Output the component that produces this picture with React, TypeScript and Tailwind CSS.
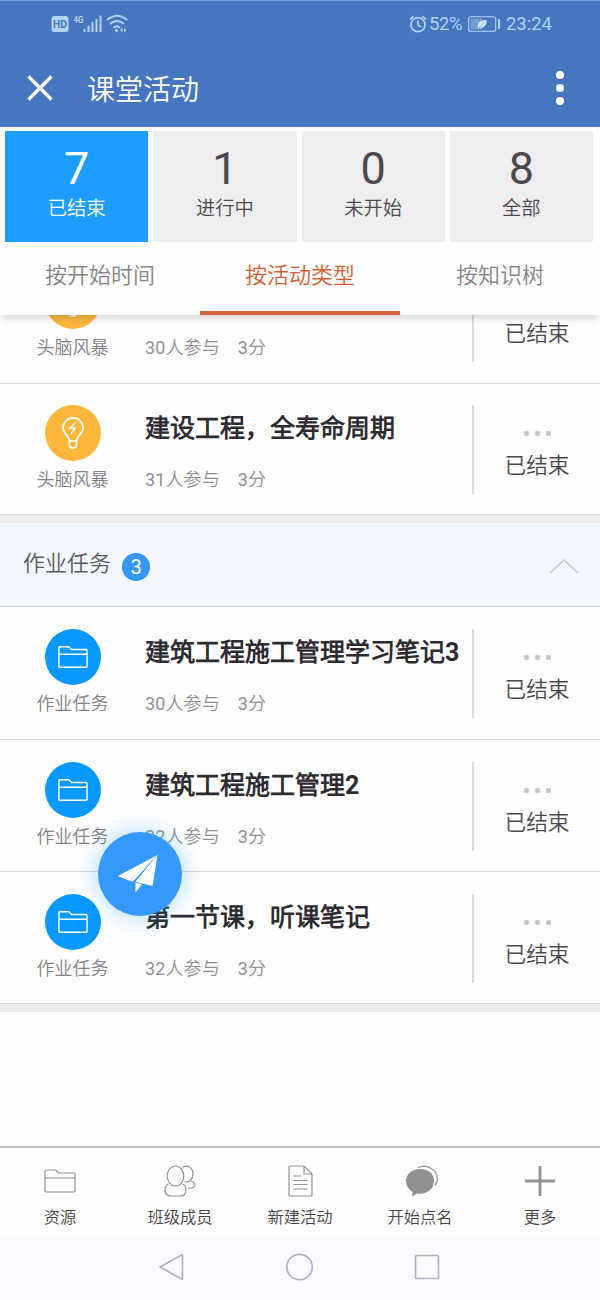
import type { ReactNode } from "react";

const FolderIcon = ({ className }: { className: string }) => (
  <svg viewBox="0 0 32 24" className={className} fill="none" stroke="currentColor" strokeLinejoin="round">
    <path d="M1 22V2.2Q1 1 2.200 1H11.500L14.500 4H29.800Q31 4 31 5.200V21.800Q31 23 29.800 23H2.200Q1 23 1 21.800ZM1 9H31" />
  </svg>
);

const BulbIcon = () => (
  <svg viewBox="0 0 24 34" className="h-[34px] w-6" fill="none" stroke="white" strokeWidth="1.700" strokeLinejoin="round" strokeLinecap="round">
    <path d="M8.500 25C8.500 20 2 18 2 11.800a10 10 0 0 1 20 0C22 18 15.500 20 15.500 25Z" />
    <path d="M8.500 25V28.500Q8.500 32 12 32T15.500 28.500V25" />
    <path d="M14 7L8.500 12.500L14.500 12L10 17.500" strokeWidth="1.300" />
  </svg>
);

type Item = { kind: "storm" | "task"; title?: string; people: number; row: string };

function Row({ kind, title, people, row }: Item) {
  return (
    <div className={`flex shrink-0 border-b border-[#d9d8db] bg-[#fefefe] ${row}`}>
      <div className="flex w-[145px] shrink-0 flex-col items-center">
        <div className={`flex h-14 w-14 items-center justify-center rounded-full text-white ${kind === "storm" ? "bg-[#fcb63b]" : "bg-[#0898ff]"}`}>
          {kind === "storm" ? <BulbIcon /> : <FolderIcon className="h-6 w-[30px] stroke-[1.500]" />}
        </div>
        <div className="mt-[7px] text-[18px] leading-6 text-[#858287]">{kind === "storm" ? "头脑风暴" : "作业任务"}</div>
      </div>
      <div className="w-[327px] shrink-0">
        <div className="mt-[8px] h-8 whitespace-nowrap text-[25px] leading-8 font-bold text-[#2d2b30]">{title}</div>
        <div className="mt-[23px] flex gap-[18px] text-[18px] leading-6 tracking-[0.1px] text-[#929094]">
          <span>{people}人参与</span>
          <span>3分</span>
        </div>
      </div>
      <div className="flex h-[89px] flex-1 flex-col items-center border-l-2 border-[#dbdadd]">
        <div className="mt-[26px] flex h-[5px] gap-[6px]">
          <i className="h-[5px] w-[5px] rounded-[2px] bg-[#c6c4c8]" />
          <i className="h-[5px] w-[5px] rounded-[2px] bg-[#c6c4c8]" />
          <i className="h-[5px] w-[5px] rounded-[2px] bg-[#c6c4c8]" />
        </div>
        <div className="mt-[14px] text-[21.7px] leading-8 text-[#4b494e]">已结束</div>
      </div>
    </div>
  );
}

const counts = [
  { n: 7, label: "已结束", style: "bg-[#1c9dff] text-white" },
  { n: 1, label: "进行中", style: "bg-[#efedef] text-[#4b494c]" },
  { n: 0, label: "未开始", style: "bg-[#efedef] text-[#4b494c]" },
  { n: 8, label: "全部", style: "bg-[#efedef] text-[#4b494c]" },
];

const NavItem = ({ label, children }: { label: string; children: ReactNode }) => (
  <div className="flex flex-1 flex-col items-center pt-[17px]">
    <div className="flex h-8 items-center justify-center text-[#939194]">{children}</div>
    <div className="mt-[9px] text-[16.300px] leading-6 text-[#464448]">{label}</div>
  </div>
);

export default function App() {
  return (
    <div className="relative flex h-[1300px] w-[600px] flex-col overflow-hidden bg-[#fefefe] font-['Roboto','Noto_Sans_CJK_SC_DemiLight','Noto_Sans_CJK_SC_Light','Noto_Sans_CJK_SC',sans-serif] font-normal">
      <header className="h-[127px] shrink-0 border-t border-[#6c9bd8] bg-[#4576bf]">
        <div className="flex h-[46px] items-center pr-[48px] pl-[51px] text-[#b3d2fa]">
          <svg viewBox="0 0 78 20" className="h-5 w-[78px]" fill="none">
            <rect x="0.500" y="2" width="17" height="16" rx="2.500" fill="currentColor" />
            <text x="2" y="13.800" fontSize="10" fontWeight="700" fill="#4576bf" textLength="14" lengthAdjust="spacingAndGlyphs">HD</text>
            <text x="22.500" y="9" fontSize="9.500" fontWeight="700" fill="currentColor" textLength="10" lengthAdjust="spacingAndGlyphs">4G</text>
            <path d="M33.500 15V18M37.500 11.500V18M41.500 8V18M45.500 5V18M49.500 1.500V18" stroke="currentColor" strokeWidth="2" />
            <path d="M56 6Q66-2.500 76 6M59 10Q66 4 73 10M62.500 13.500Q66 10.800 69 13.500" stroke="currentColor" strokeWidth="1.900" />
            <path d="M65 14.500L67.500 16.500L65.500 18.500L63.500 16.500ZM71.500 13.500V18.500L69.200 16ZM73 13.500V18.500L75.500 16Z" fill="currentColor" />
          </svg>
          <div className="ml-auto flex items-center">
            <svg viewBox="0 0 18 18" className="h-[18px] w-[18px]" fill="none" stroke="currentColor" strokeWidth="1.700">
              <circle cx="9" cy="9.700" r="7" />
              <path d="M9 5.500V10L12 12M1 4.500L4.500 1.300M17 4.500L13.500 1.300" />
            </svg>
            <span className="mt-[2px] ml-[2px] w-[35px] text-[18.500px] tracking-[-0.4px]">52%</span>
            <svg viewBox="0 0 33 16" className="ml-1 h-4 w-[33px]" fill="none">
              <rect x="0.700" y="0.700" width="27" height="14.600" rx="2" stroke="currentColor" strokeWidth="1.100" />
              <rect x="2.500" y="2.500" width="12" height="11" fill="#729cda" />
              <path d="M10 12C9 7 12 4 18.500 4C19 9 16 12.500 11.500 11.500L10.500 13Z" fill="#d7e8ff" />
              <path d="M11 12L16 6.500" stroke="#729cda" strokeWidth="0.800" />
              <path d="M31 3V13" stroke="currentColor" strokeWidth="2" />
            </svg>
            <span className="mt-[2px] ml-[5px] text-[18.500px]">23:24</span>
          </div>
        </div>
        <div className="flex h-[80px] items-center pr-[36px] pl-[27px] text-white">
          <svg viewBox="0 0 26 26" className="mt-px h-[26px] w-[26px]" stroke="currentColor" strokeWidth="3.300">
            <path d="M1.500 1.500L24.500 24.500M24.500 1.500L1.500 24.500" />
          </svg>
          <h1 className="mt-[7px] ml-[34px] text-[28px] leading-10">课堂活动</h1>
          <div className="mt-px ml-auto flex flex-col gap-[5px]">
            <i className="h-[8px] w-[8px] rounded-full bg-white" />
            <i className="h-[8px] w-[8px] rounded-full bg-white" />
            <i className="h-[8px] w-[8px] rounded-full bg-white" />
          </div>
        </div>
      </header>

      <div className="grid h-[115px] shrink-0 grid-cols-4 gap-[5px] pt-1 pr-[7px] pl-[5px]">
        {counts.map((c) => (
          <div key={c.label} className={`flex flex-col items-center ${c.style}`}>
            <div className="mt-[14px] text-[45px] leading-[48px]">{c.n}</div>
            <div className="mt-[2px] text-[19.300px] leading-7">{c.label}</div>
          </div>
        ))}
      </div>

      <div className="z-10 flex h-[73px] shrink-0 bg-[#fefefe] text-center text-[22px] leading-[67px] text-[#858386] shadow-[0_6px_7px_-3px_rgba(60,50,70,0.22)]">
        <div className="flex-1">按开始时间</div>
        <div className="flex-1 border-b-4 border-[#d0643b] text-[#d55f32]">按活动类型</div>
        <div className="flex-1">按知识树</div>
      </div>

      <div className="flex h-[69px] shrink-0 flex-col justify-end overflow-hidden">
        <Row kind="storm" people={30} row="h-[132px] pt-[21px]" />
      </div>
      <Row kind="storm" title="建设工程，全寿命周期" people={31} row="h-[131px] pt-[21px]" />
      <div className="h-2 shrink-0 bg-[#eeecef]" />
      <div className="flex h-[84px] shrink-0 items-center border-b border-[#d9d8db] bg-[#f3f7ff] pr-[21px] pl-[23px]">
        <span className="mb-[2px] text-[22px] leading-8 text-[#5b595d]">作业任务</span>
        <span className="mt-[4px] ml-[11px] h-7 w-7 rounded-full bg-[#3597f9] text-center text-[20px] leading-7 text-white">3</span>
        <svg viewBox="0 0 30 15" className="mt-[3px] ml-auto h-[15px] w-[30px]" fill="none" stroke="#c5c8d0" strokeWidth="1.400">
          <path d="M1 14L15 1L29 14" />
        </svg>
      </div>
      <Row kind="task" title="建筑工程施工管理学习笔记3" people={30} row="h-[133px] pt-[22px]" />
      <Row kind="task" title="建筑工程施工管理2" people={32} row="h-[132px] pt-[22px]" />
      <Row kind="task" title="第一节课，听课笔记" people={32} row="h-[132px] pt-[22px]" />
      <div className="h-2 shrink-0 bg-[#eeecef]" />

      <nav className="mt-auto flex h-[91px] shrink-0 border-t-2 border-[#c2c1c3]">
        <NavItem label="资源"><FolderIcon className="h-6 w-8 stroke-[1.200]" /></NavItem>
        <NavItem label="班级成员">
          <svg viewBox="0 0 32 32" className="h-8 w-8" fill="none" stroke="currentColor" strokeWidth="1.200">
            <ellipse cx="11.500" cy="11" rx="8.300" ry="10" />
            <path d="M4.500 19Q1 20.500 1 25Q1 31 7 31H16Q22 31 22 25Q22 20.500 18.500 19" />
            <path d="M18.500 2.500C24-1 29 3.500 29 9C29 14.500 25 18 20.500 16.500M27 16Q31 17.500 31 20Q31 23.500 24 23" />
          </svg>
        </NavItem>
        <NavItem label="新建活动">
          <svg viewBox="0 0 25 32" className="h-8 w-[25px]" fill="none" stroke="currentColor" strokeWidth="1.200">
            <path d="M2 1H16L24 9V30Q24 31 23 31H2Q1 31 1 30V2Q1 1 2 1ZM16 1V9H24M5.500 11H13M5.500 15.500H19.500M5.500 19.500H19.500M5.500 24H19.500" />
          </svg>
        </NavItem>
        <NavItem label="开始点名">
          <svg viewBox="0 0 32 32" className="ml-[3px] h-8 w-8" fill="none">
            <path d="M14 4C6 4 0 9 0 16Q0 23 6.500 27L6 31.500L11 28.500C21 30 28 24 28 16S22 4 14 4Z" fill="currentColor" />
            <path d="M12 2.500C22-1 31 5 31.300 13Q31.500 18 28.800 20.500" stroke="currentColor" strokeWidth="1.200" />
          </svg>
        </NavItem>
        <NavItem label="更多">
          <svg viewBox="0 0 30 30" className="h-[30px] w-[30px]" stroke="currentColor" strokeWidth="2.800"><path d="M0 15H30M15 0V30" /></svg>
        </NavItem>
      </nav>
      <div className="flex h-[63px] shrink-0 items-center justify-center bg-[#fcfaff] text-[#b5b3b7]">
        <svg viewBox="0 0 284 30" className="mb-[3px] -ml-[2px] h-[30px] w-[284px]" fill="none" stroke="currentColor" strokeWidth="1.700" strokeLinejoin="round">
          <path d="M25.500 2.500V27.500L3 15Z" />
          <circle cx="142.500" cy="15" r="12.700" />
          <rect x="258.500" y="3.500" width="23" height="23" rx="1" />
        </svg>
      </div>

      <button aria-label="发送" className="absolute top-[832px] left-[98px] z-20 h-[84px] w-[84px] rounded-full bg-[#3598fb] shadow-[0_0_22px_rgba(30,160,255,0.42)]">
        <svg viewBox="0 0 84 84" className="h-[84px] w-[84px]">
          <path d="M59.500 23L20 44L32 49ZM59.500 23L37.500 49.800L54.500 54ZM37.500 50.500V60.500L44 52.300Z" fill="white" />
          <path d="M59.500 23L32 49L35 49.500Z" fill="white" />
        </svg>
      </button>
    </div>
  );
}
